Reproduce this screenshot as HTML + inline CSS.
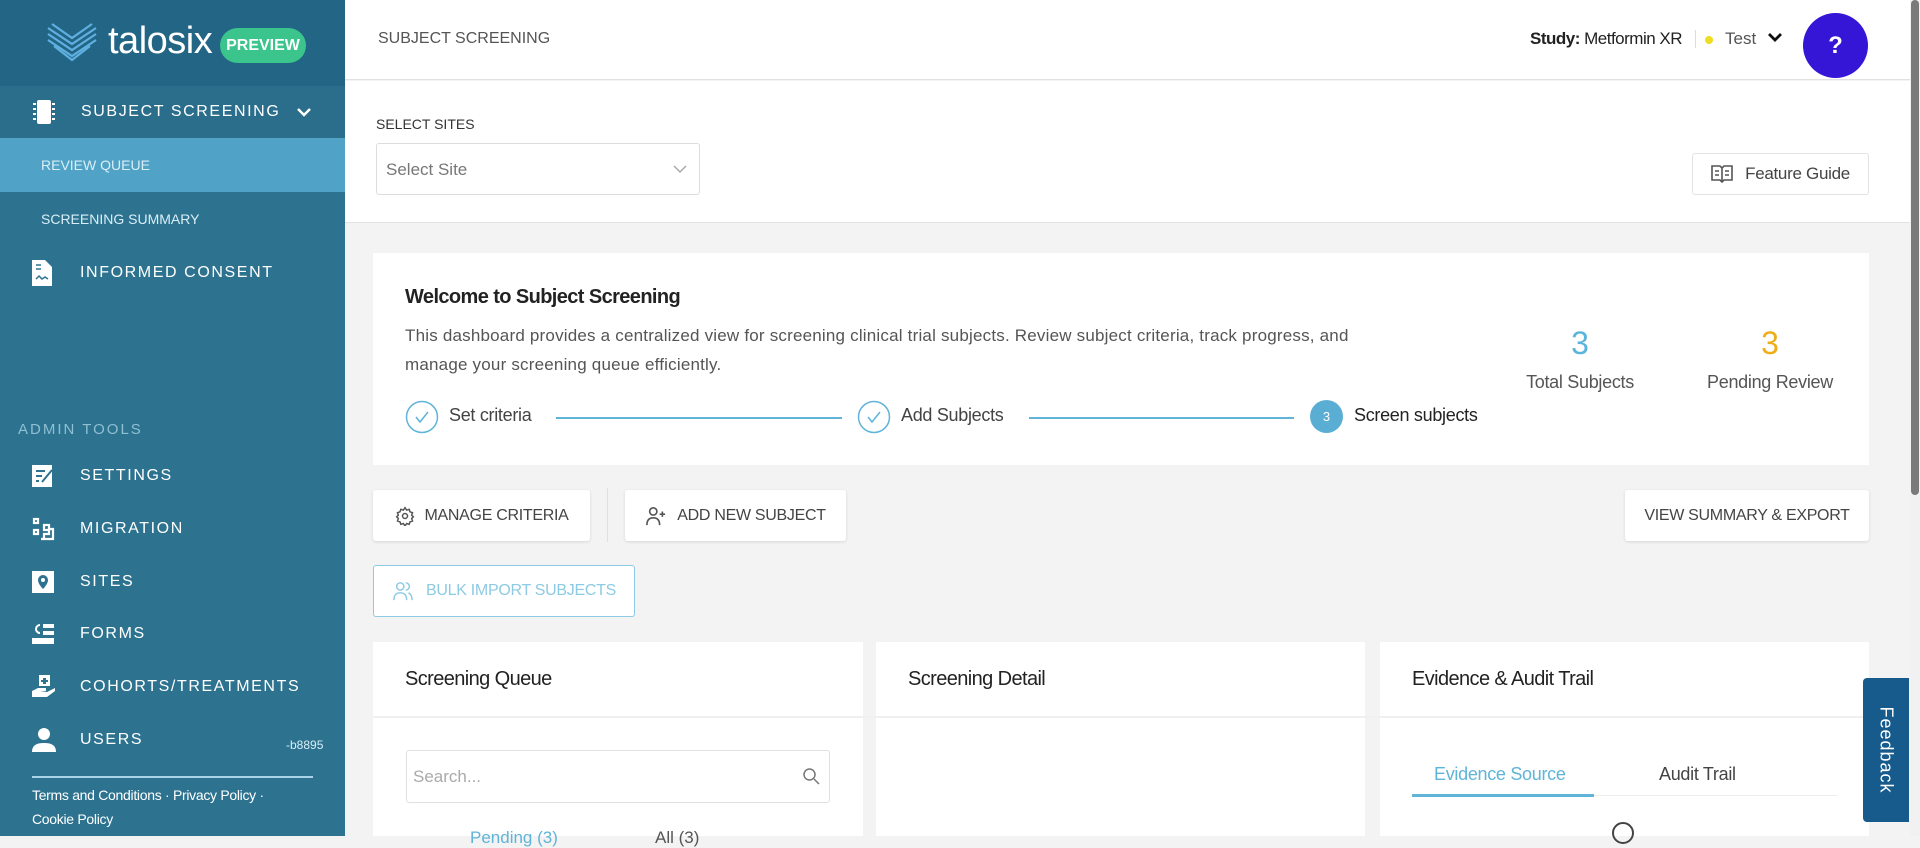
<!DOCTYPE html>
<html><head><meta charset="utf-8"><style>
*{box-sizing:border-box;margin:0;padding:0}
body{width:1920px;height:836px;overflow:hidden;font-family:"Liberation Sans",sans-serif;background:#f3f3f3;position:relative}
.sb{position:absolute;left:0;top:0;width:345px;height:836px;background:#2d7390;color:#fff}
.logo{height:86px;background:#236585;position:relative}
.nav{position:absolute;left:0;width:345px;display:flex;align-items:center;font-size:16px;letter-spacing:1.6px}
.nav svg{position:absolute;left:32px}
.nav span{position:absolute;left:80px}
.abs{position:absolute}
.btn{position:absolute;background:#fff;border-radius:3px;box-shadow:0 1px 3px rgba(0,0,0,.12);display:flex;align-items:center;justify-content:center;font-size:16px;letter-spacing:-0.3px;color:#444}
.card{position:absolute;background:#fff}
.t{letter-spacing:-0.3px}
</style></head><body>
<div class="sb">
 <div class="logo">
  <svg class="abs" style="left:44px;top:20px" width="56" height="44" viewBox="0 0 56 44"><g fill="none" stroke="#5fb0e0" stroke-width="2.2"><path d="M4 8 L28 24 L52 8"/><path d="M4 14 L28 30 L52 14"/><path d="M4 20 L28 36 L52 20"/><path d="M8 4 L28 18 L48 4"/><path d="M10 26 L28 40 L46 26"/></g></svg>
  <div class="abs" style="left:108px;top:20px;font-size:38px;color:#fff;letter-spacing:-0.5px">talosix</div>
  <div class="abs" style="left:220px;top:28px;width:86px;height:35px;border-radius:18px;background:#3bc48b;font-size:16px;font-weight:bold;color:#fff;display:flex;align-items:center;justify-content:center">PREVIEW</div>
 </div>
 <div class="abs" style="top:86px;left:0;width:345px;height:52px;background:#2a6e8c"></div>
 <div class="nav" style="top:86px;height:52px"><svg width="24" height="26" viewBox="0 0 24 26"><rect x="5" y="1" width="14" height="24" rx="2" fill="#fff"/><g stroke="#fff" stroke-width="2"><path d="M1 5h3M1 10h3M1 15h3M1 20h3M20 5h3M20 10h3M20 15h3M20 20h3"/></g></svg><span style="left:81px">SUBJECT SCREENING</span>
  <svg style="left:296px" width="16" height="12" viewBox="0 0 16 12"><path d="M2 3l6 6 6-6" fill="none" stroke="#fff" stroke-width="2.5"/></svg></div>
 <div class="abs" style="top:138px;left:0;width:345px;height:54px;background:#50a3c6"></div>
 <div class="abs" style="top:157px;left:41px;font-size:14px;color:#d9eef7">REVIEW QUEUE</div>
 <div class="abs" style="top:211px;left:41px;font-size:14px;color:#d9eef7">SCREENING SUMMARY</div>
 <div class="nav" style="top:255px;height:36px"><svg width="20" height="26" viewBox="0 0 20 26"><path d="M0 0h13l7 7v19H0z" fill="#fff"/><path d="M4 5h5M4 9h5M4 19l3-3 3 3 3-2 3 2" stroke="#2d7390" stroke-width="1.5" fill="none"/></svg><span>INFORMED CONSENT</span></div>
 <div class="abs" style="top:421px;left:18px;font-size:15px;letter-spacing:2px;color:#8fbfd2">ADMIN TOOLS</div>
 <div class="nav" style="top:458px;height:36px"><svg width="24" height="22" viewBox="0 0 24 22"><rect x="0" y="0" width="20" height="22" fill="#fff"/><path d="M4 6h9M4 11h6M4 16h3M10 17l10-12" stroke="#2d7390" stroke-width="2"/></svg><span>SETTINGS</span></div>
 <div class="nav" style="top:511px;height:36px"><svg width="24" height="24" viewBox="0 0 24 24" fill="none" stroke="#fff" stroke-width="2.2"><rect x="2" y="2" width="4" height="4"/><rect x="2" y="13" width="4" height="4"/><rect x="12" y="8" width="5" height="5"/><path d="M9 22h12V12h-4v5h-5v5"/></svg><span>MIGRATION</span></div>
 <div class="nav" style="top:564px;height:36px"><svg width="22" height="22" viewBox="0 0 22 22"><rect width="22" height="22" fill="#fff"/><path d="M11 4a5 5 0 0 0-5 5c0 4 5 9 5 9s5-5 5-9a5 5 0 0 0-5-5z" fill="#2d7390"/><circle cx="11" cy="9" r="2" fill="#fff"/></svg><span>SITES</span></div>
 <div class="nav" style="top:616px;height:36px"><svg width="22" height="24" viewBox="0 0 22 24"><rect x="11" y="2" width="11" height="4" fill="#fff"/><rect x="11" y="9" width="11" height="4" fill="#fff"/><rect x="0" y="16" width="22" height="6" fill="#fff"/><path d="M8 3a4 4 0 0 0 0 8h-2" stroke="#fff" stroke-width="2" fill="none"/></svg><span>FORMS</span></div>
 <div class="nav" style="top:669px;height:36px"><svg width="24" height="24" viewBox="0 0 24 24" fill="#fff"><rect x="7" y="0" width="11" height="11"/><path d="M11 3h3v2h2v2h-2v2h-3v-2h-2v-2h2z" fill="#2d7390"/><path d="M0 16l6-3h8v3H8l7 1 8-4v3l-8 6H0z"/></svg><span>COHORTS/TREATMENTS</span></div>
 <div class="nav" style="top:722px;height:36px"><svg width="24" height="24" viewBox="0 0 24 24" fill="#fff"><circle cx="12" cy="6" r="6"/><path d="M0 24c0-7 5-9 12-9s12 2 12 9z"/></svg><span>USERS</span></div>
 <div class="abs" style="top:738px;left:286px;font-size:12px;color:#d9eef7">-b8895</div>
 <div class="abs" style="top:776px;left:32px;width:281px;height:2px;background:#a9d3e6"></div>
 <div class="abs t" style="top:783px;left:32px;font-size:14px;color:#fff;line-height:24px;width:290px">Terms and Conditions · Privacy Policy ·<br>Cookie Policy</div>
</div>

<!-- top bar -->
<div class="abs" style="left:345px;top:0;width:1565px;height:80px;background:#fff;border-bottom:1px solid #e2e2e2"></div>
<div class="abs" style="left:378px;top:30px;font-size:16px;color:#555">SUBJECT SCREENING</div>
<div class="abs t" style="left:1530px;top:29px;font-size:17px;color:#222;letter-spacing:-0.5px"><b>Study:</b> Metformin XR</div>
<div class="abs" style="left:1695px;top:30px;width:1px;height:18px;background:#ddd"></div>
<div class="abs" style="left:1705px;top:36px;width:8px;height:8px;border-radius:50%;background:#f0dd20"></div>
<div class="abs" style="left:1725px;top:29px;font-size:17px;color:#555">Test</div>
<svg class="abs" style="left:1767px;top:32px" width="16" height="12" viewBox="0 0 16 12"><path d="M2 2l6 6 6-6" fill="none" stroke="#111" stroke-width="2.8"/></svg>
<div class="abs" style="left:1803px;top:13px;width:65px;height:65px;border-radius:50%;background:#3515d6;color:#fff;font-weight:bold;font-size:24px;display:flex;align-items:center;justify-content:center">?</div>

<!-- select sites -->
<div class="abs" style="left:345px;top:81px;width:1565px;height:142px;background:#fff;border-bottom:1px solid #e2e2e2"></div>
<div class="abs" style="left:376px;top:116px;font-size:14px;color:#333">SELECT SITES</div>
<div class="abs" style="left:376px;top:143px;width:324px;height:52px;border:1px solid #ddd;border-radius:3px;font-size:17px;color:#777;padding:16px 9px">Select Site</div>
<svg class="abs" style="left:672px;top:164px" width="16" height="10" viewBox="0 0 16 10"><path d="M2 2l6 6 6-6" fill="none" stroke="#aaa" stroke-width="1.5"/></svg>
<div class="btn" style="left:1692px;top:153px;width:177px;height:42px;border:1px solid #e3e3e3;box-shadow:none;font-size:17px"><svg width="22" height="18" viewBox="0 0 22 18" style="margin-right:12px" fill="none" stroke="#555" stroke-width="1.6"><path d="M1 1h8l2 2 2-2h8v14h-8l-2 2-2-2H1z M11 3v14"/><path d="M4 6h4M4 10h4M14 6h4M14 10h4"/></svg>Feature Guide</div>

<!-- welcome card -->
<div class="card" style="left:373px;top:253px;width:1496px;height:212px"></div>
<div class="abs t" style="left:405px;top:286px;font-size:20px;color:#222;font-weight:bold;letter-spacing:-0.6px">Welcome to Subject Screening</div>
<div class="abs" style="left:405px;top:321px;font-size:17px;color:#555;line-height:29px;width:960px;letter-spacing:0.2px">This dashboard provides a centralized view for screening clinical trial subjects. Review subject criteria, track progress, and manage your screening queue efficiently.</div>
<svg class="abs" style="left:405px;top:400px" width="34" height="34" viewBox="0 0 34 34"><circle cx="17" cy="17" r="15.5" fill="none" stroke="#5fb4d8" stroke-width="1.5"/><path d="M11 17l4 5 8-10" fill="none" stroke="#5fb4d8" stroke-width="1.5"/></svg>
<div class="abs t" style="left:449px;top:405px;font-size:18px;color:#444">Set criteria</div>
<div class="abs" style="left:556px;top:417px;width:286px;height:1.5px;background:#5fb4d8"></div>
<svg class="abs" style="left:857px;top:400px" width="34" height="34" viewBox="0 0 34 34"><circle cx="17" cy="17" r="15.5" fill="none" stroke="#5fb4d8" stroke-width="1.5"/><path d="M11 17l4 5 8-10" fill="none" stroke="#5fb4d8" stroke-width="1.5"/></svg>
<div class="abs t" style="left:901px;top:405px;font-size:18px;color:#444">Add Subjects</div>
<div class="abs" style="left:1029px;top:417px;width:265px;height:1.5px;background:#5fb4d8"></div>
<div class="abs" style="left:1310px;top:400px;width:33px;height:33px;border-radius:50%;background:#5aaed3;color:#fff;font-size:13px;display:flex;align-items:center;justify-content:center">3</div>
<div class="abs t" style="left:1354px;top:405px;font-size:18px;color:#222">Screen subjects</div>
<div class="abs" style="left:1490px;top:325px;width:180px;text-align:center;font-size:32px;color:#5ab4dc">3</div>
<div class="abs t" style="left:1490px;top:372px;width:180px;text-align:center;font-size:18px;color:#555">Total Subjects</div>
<div class="abs" style="left:1680px;top:325px;width:180px;text-align:center;font-size:32px;color:#f0ad1a">3</div>
<div class="abs t" style="left:1680px;top:372px;width:180px;text-align:center;font-size:18px;color:#555">Pending Review</div>

<!-- buttons -->
<div class="btn" style="left:373px;top:490px;width:217px;height:51px"><svg width="20" height="20" viewBox="0 0 24 24" style="margin-right:10px" fill="none" stroke="#555" stroke-width="1.8"><circle cx="12" cy="12" r="3"/><path d="M12 2l2 3 3-1 1 3 3 1-1 3 2 2-2 2 1 3-3 1-1 3-3-1-2 3-2-3-3 1-1-3-3-1 1-3-2-2 2-2-1-3 3-1 1-3 3 1z"/></svg>MANAGE CRITERIA</div>
<div class="abs" style="left:607px;top:488px;width:1px;height:54px;background:#e0e0e0"></div>
<div class="btn" style="left:625px;top:490px;width:221px;height:51px"><svg width="22" height="20" viewBox="0 0 24 22" style="margin-right:10px" fill="none" stroke="#555" stroke-width="1.8"><circle cx="9" cy="6" r="4"/><path d="M2 21c0-6 3-8 7-8s7 2 7 8M19 6v6M16 9h6"/></svg>ADD NEW SUBJECT</div>
<div class="btn" style="left:1625px;top:490px;width:244px;height:51px">VIEW SUMMARY &amp; EXPORT</div>
<div class="btn" style="left:373px;top:565px;width:262px;height:52px;border:1.5px solid #8dcae3;box-shadow:none;color:#8dcae3"><svg width="22" height="20" viewBox="0 0 24 22" style="margin-right:12px" fill="none" stroke="#8dcae3" stroke-width="1.6"><circle cx="9" cy="6" r="4"/><path d="M2 21c0-6 3-8 7-8s7 2 7 8M15 2a4 4 0 0 1 0 8M18 13c2 1 4 3 4 8"/></svg>BULK IMPORT SUBJECTS</div>

<!-- panels -->
<div class="card" style="left:373px;top:642px;width:490px;height:194px"></div>
<div class="card" style="left:876px;top:642px;width:489px;height:194px"></div>
<div class="card" style="left:1380px;top:642px;width:489px;height:194px"></div>
<div class="abs" style="left:373px;top:716px;width:1496px;height:2px;background:#f0f0f0"></div>
<div class="abs t" style="left:405px;top:668px;font-size:20px;color:#222;letter-spacing:-0.6px">Screening Queue</div>
<div class="abs t" style="left:908px;top:668px;font-size:20px;color:#222;letter-spacing:-0.6px">Screening Detail</div>
<div class="abs t" style="left:1412px;top:668px;font-size:20px;color:#222;letter-spacing:-0.6px">Evidence &amp; Audit Trail</div>
<div class="abs" style="left:406px;top:750px;width:424px;height:53px;border:1px solid #e0e0e0;border-radius:3px;font-size:17px;color:#aaa;padding:16px 6px">Search...</div>
<svg class="abs" style="left:802px;top:767px" width="18" height="18" viewBox="0 0 18 18" fill="none" stroke="#777" stroke-width="1.5"><circle cx="7.5" cy="7.5" r="5.5"/><path d="M12 12l5 5"/></svg>
<div class="abs" style="left:470px;top:828px;font-size:17px;color:#5fb4d8">Pending (3)</div>
<div class="abs" style="left:655px;top:828px;font-size:17px;color:#555">All (3)</div>
<div class="abs t" style="left:1434px;top:764px;font-size:18px;color:#5fb4d8">Evidence Source</div>
<div class="abs t" style="left:1659px;top:764px;font-size:18px;color:#444">Audit Trail</div>
<div class="abs" style="left:1412px;top:795px;width:426px;height:1px;background:#eee"></div>
<div class="abs" style="left:1412px;top:794px;width:182px;height:3px;background:#5fb4d8"></div>
<div class="abs" style="left:1612px;top:822px;width:22px;height:22px;border:2px solid #444;border-radius:50%"></div>

<!-- feedback -->
<div class="abs" style="left:1863px;top:678px;width:46px;height:144px;background:#175a8c;border-radius:4px 0 0 4px"></div>
<div class="abs" style="left:1886px;top:750px;transform:translate(-50%,-50%) rotate(90deg);color:#fff;font-size:18px;letter-spacing:1px;white-space:nowrap">Feedback</div>
<!-- scrollbar -->
<div class="abs" style="left:1910px;top:0;width:10px;height:836px;background:#f1f1f1"></div>
<div class="abs" style="left:1911px;top:0;width:8px;height:495px;background:#7a7a7a;border-radius:4px"></div>
</body></html>
